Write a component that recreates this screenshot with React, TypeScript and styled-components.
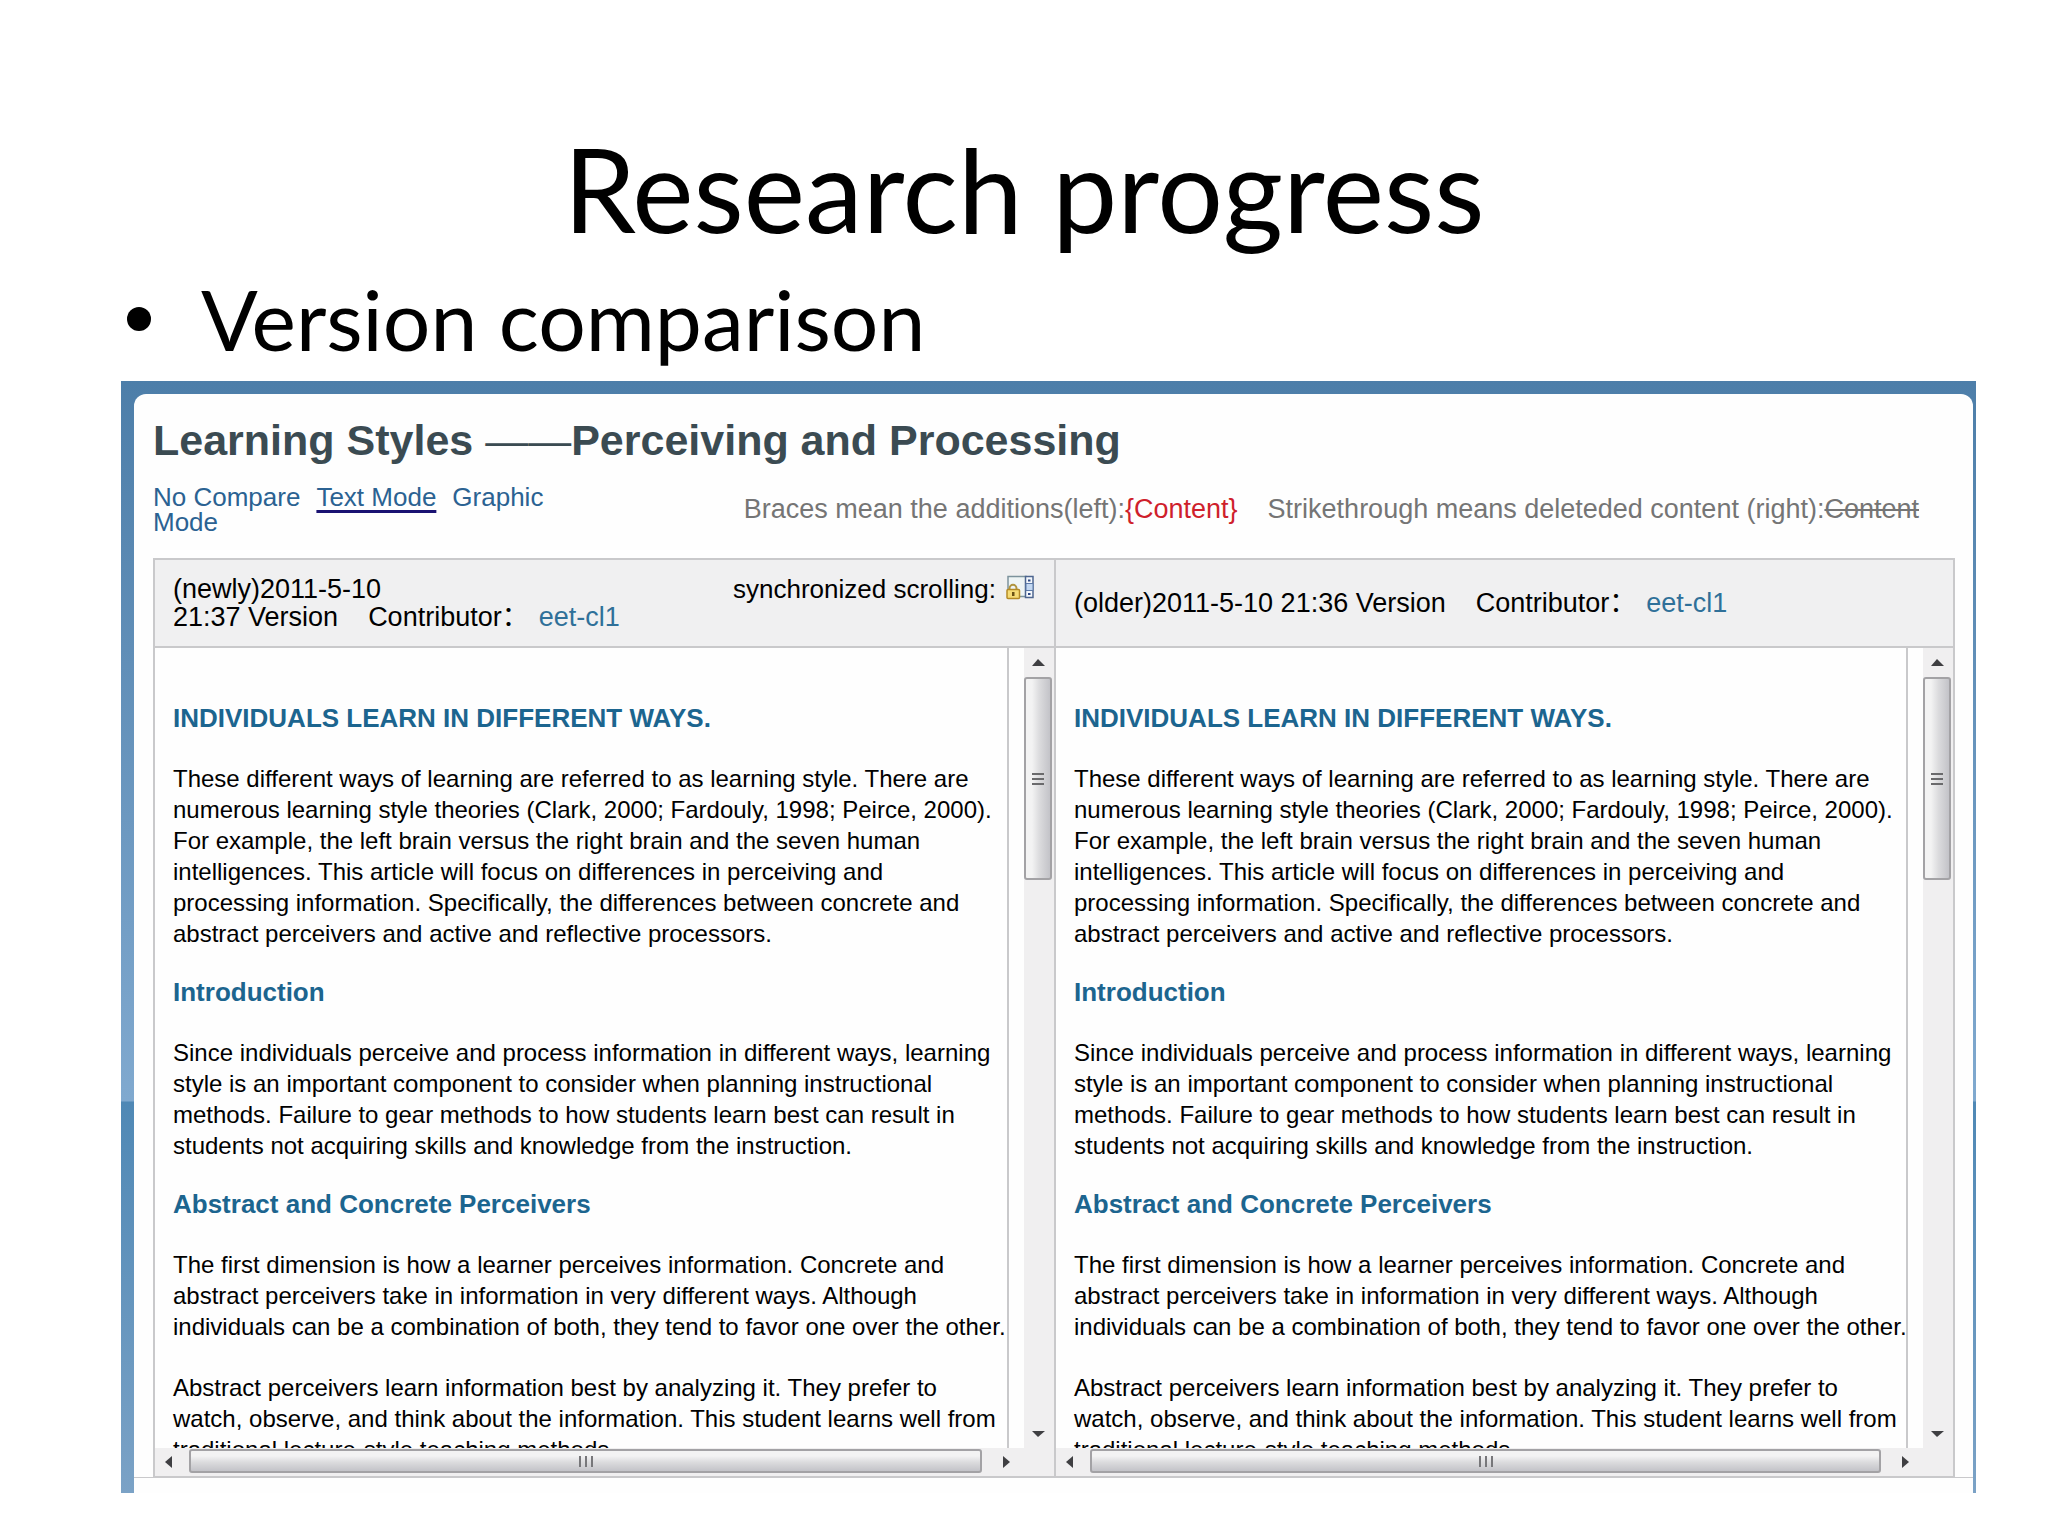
import React from "react";
import styled, { createGlobalStyle } from "styled-components";

const ui = '"Liberation Sans", Arial, "Noto Sans CJK SC", sans-serif';
const line = "#c9c9cb";

const GlobalStyle = createGlobalStyle`
  * { box-sizing: border-box; }
  body { margin: 0; background: #fff; color: #000; font-family: ${ui}; }
`;

const Slide = styled.main`
  display: flex;
  flex-direction: column;
  padding: 117px 72px 40px 121px;
`;

const SlideTitle = styled.h1`
  margin: 0 0 0 -49px;
  font: 400 116px/144px Lato, sans-serif;
  text-align: center;
`;

const Points = styled.ul`
  margin: 0;
  padding: 0;
  list-style: none;
`;

const Point = styled.li`
  display: flex;
  align-items: center;
  gap: 50px;
  margin: 8px 0 12px 6px;
  font: 400 84px/100px Lato, sans-serif;
  &::before {
    content: "";
    width: 24px;
    height: 24px;
    border-radius: 50%;
    background: #000;
  }
`;

const Frame = styled.section`
  padding: 13px 3px 0 13px;
  background: linear-gradient(#4d7ea9, #80a9cf 720px, #4f88b5 721px, #7ba2c6);
`;

const Sheet = styled.div`
  padding: 24px 18px 0 19px;
  background: #fefefe;
  border-bottom: 1px solid ${line};
  border-radius: 12px 12px 0 0;
`;

const FrameFoot = styled.div`
  height: 15px;
  background: #fefefe;
`;

const DocTitle = styled.h2`
  margin: 0;
  color: #3b4b52;
  font-size: 43px;
  line-height: 44px;
`;

const Dash = styled.span`
  font-weight: 400;
`;

const Toolbar = styled.div`
  display: flex;
  justify-content: space-between;
  padding: 23px 36px 23px 0;
  font-size: 26px;
  line-height: 25px;
`;

const Modes = styled.nav`
  width: 420px;
`;

const ModeLink = styled.a<{ $current?: boolean }>`
  margin-right: 16px;
  color: #2b6292;
  text-decoration: ${(p) => (p.$current ? "underline 3px #1a1272" : "none")};
  text-underline-offset: 4px;
  text-decoration-skip-ink: none;
`;

const Legend = styled.p`
  display: flex;
  gap: 30px;
  margin: 12px 0 0;
  color: #757575;
  font-size: 27px;
`;

const Added = styled.ins`
  color: #cf1f2c;
  text-decoration: none;
`;

const Compare = styled.div`
  display: grid;
  grid-template-columns: 1fr 1fr;
  border: 2px solid ${line};
  border-bottom-width: 1px;
`;

const Version = styled.article`
  min-width: 0;
  & + & { border-left: 2px solid ${line}; }
`;

const VersionHead = styled.header`
  display: flex;
  justify-content: space-between;
  align-items: center;
  height: 88px;
  padding: 0 20px 0 18px;
  background: #f0f0f1;
  border-bottom: 2px solid ${line};
  font-size: 27px;
  line-height: 28px;
`;

const Contributor = styled.span`
  margin-left: 30px;
`;

const UserLink = styled.a`
  margin-left: 10px;
  color: #2f7099;
  text-decoration: none;
`;

const Sync = styled.button`
  display: flex;
  align-self: flex-start;
  gap: 10px;
  margin-top: 15px;
  padding: 0;
  border: 0;
  background: none;
  color: inherit;
  font-family: inherit;
  font-size: 26px;
  line-height: 28px;
`;

const Viewport = styled.div`
  display: grid;
  grid-template-columns: minmax(0, 1fr) 30px;
  grid-template-rows: 800px 28px;
`;

const Page = styled.div`
  margin-right: 15px;
  padding: 55px 0 0 18px;
  overflow: hidden;
  border-right: 2px solid ${line};
  font-size: 24px;
  line-height: 31px;
  white-space: nowrap;
`;

const SectionHead = styled.h3`
  margin: 0 0 29px;
  color: #1c658f;
  font-size: 26px;
  line-height: 31px;
`;

const Para = styled.p`
  margin: 0 0 28px;
  & + & { margin-top: 30px; }
`;

const Bar = styled.div<{ $across?: boolean }>`
  display: flex;
  flex-direction: ${(p) => (p.$across ? "row" : "column")};
  padding: ${(p) => (p.$across ? "0 4px 0 0" : "1px 0 0")};
  background: #f0eff0;
`;

const Arrow = styled.button`
  display: grid;
  place-items: center;
  width: 28px;
  height: 28px;
  padding: 0;
  border: 0;
  background: none;
`;

const ThumbV = styled.div`
  display: grid;
  place-items: center;
  width: 28px;
  height: 203px;
  border: 2px solid #a3a2a5;
  border-radius: 3px;
  background: linear-gradient(90deg, #f3f3f3 0 25%, #dcdcde 55%, #c3c3c8);
`;

const ThumbH = styled.div`
  display: grid;
  place-items: center;
  flex: 1;
  height: 24px;
  margin: 1px 10px 0 6px;
  border: 2px solid #a3a2a5;
  border-radius: 3px;
  background: linear-gradient(#f3f3f3 0 25%, #dcdcde 55%, #c3c3c8);
`;

const Push = styled.div`
  flex: 1;
`;

const Corner = styled.div`
  background: #f0eff0;
`;

const arrows = {
  up: "M0 9 6 2l7 7z",
  down: "M0 3h13L6 9z",
  left: "M9 0v12L2 6z",
  right: "M3 0v12l7-6z",
};

function ArrowButton({ dir }: { dir: keyof typeof arrows }) {
  return (
    <Arrow type="button" aria-label={"Scroll " + dir}>
      <svg width="13" height="12" viewBox="0 0 13 12"><path d={arrows[dir]} fill="#3f3f42" /></svg>
    </Arrow>
  );
}

function LockIcon() {
  return (
    <svg width="28" height="25" viewBox="0 0 28 25">
      <path d="M2 1.5h18v20H2z" fill="#eef4f5" stroke="#7d939d" strokeWidth="1.5" />
      <path d="M19.5 1.5h7.5v21h-7.5z" fill="#f4f8fd" stroke="#4d658f" strokeWidth="1.5" />
      <path d="M20 8.5h7v7h-7z" fill="#c3d8f2" stroke="#5d7aa8" strokeWidth="1" />
      <path d="M22 4.5h2.5v2H22zM22 18h2.5v2H22z" fill="#2f4a86" />
      <path d="M3.5 15v-1.5a3.5 3.8 0 0 1 7 0V15" fill="none" stroke="#b0943f" strokeWidth="2" />
      <rect x="1" y="14.5" width="12.5" height="9" rx="1" fill="#f6dc76" stroke="#b48a26" strokeWidth="1.5" />
      <path d="M6 17h2.5v4H6z" fill="#6b5214" />
    </svg>
  );
}

function Article() {
  return (
    <>
      <SectionHead>INDIVIDUALS LEARN IN DIFFERENT WAYS.</SectionHead>
      <Para>
        These different ways of learning are referred to as learning style. There are<br />
        numerous learning style theories (Clark, 2000; Fardouly, 1998; Peirce, 2000).<br />
        For example, the left brain versus the right brain and the seven human<br />
        intelligences. This article will focus on differences in perceiving and<br />
        processing information. Specifically, the differences between concrete and<br />
        abstract perceivers and active and reflective processors.
      </Para>
      <SectionHead>Introduction</SectionHead>
      <Para>
        Since individuals perceive and process information in different ways, learning<br />
        style is an important component to consider when planning instructional<br />
        methods. Failure to gear methods to how students learn best can result in<br />
        students not acquiring skills and knowledge from the instruction.
      </Para>
      <SectionHead>Abstract and Concrete Perceivers</SectionHead>
      <Para>
        The first dimension is how a learner perceives information. Concrete and<br />
        abstract perceivers take in information in very different ways. Although<br />
        individuals can be a combination of both, they tend to favor one over the other.
      </Para>
      <Para>
        Abstract perceivers learn information best by analyzing it. They prefer to<br />
        watch, observe, and think about the information. This student learns well from<br />
        traditional lecture-style teaching methods.
      </Para>
    </>
  );
}

function Scroller() {
  return (
    <Viewport>
      <Page><Article /></Page>
      <Bar>
        <ArrowButton dir="up" />
        <ThumbV><svg width="12" height="14"><path d="M0 2h12M0 7h12M0 12h12" stroke="#6a6a6c" strokeWidth="2" /></svg></ThumbV>
        <Push />
        <ArrowButton dir="down" />
      </Bar>
      <Bar $across>
        <ArrowButton dir="left" />
        <ThumbH><svg width="16" height="11"><path d="M2 0v11M8 0v11M14 0v11" stroke="#77777a" strokeWidth="2" /></svg></ThumbH>
        <ArrowButton dir="right" />
      </Bar>
      <Corner />
    </Viewport>
  );
}

export default function App() {
  return (
    <Slide>
      <GlobalStyle />
      <SlideTitle>Research progress</SlideTitle>
      <Points><Point>Version comparison</Point></Points>
      <Frame>
        <Sheet>
          <DocTitle>Learning Styles <Dash>——</Dash>Perceiving and Processing</DocTitle>
          <Toolbar>
            <Modes>
              <ModeLink href="#none">No Compare</ModeLink>
              <ModeLink href="#text" $current>Text Mode</ModeLink>
              <ModeLink href="#graphic">Graphic Mode</ModeLink>
            </Modes>
            <Legend>
              <span>Braces mean the additions(left):<Added>{"{Content}"}</Added></span>
              <span>Strikethrough means deleteded content (right):<del>Content</del></span>
            </Legend>
          </Toolbar>
          <Compare>
            <Version>
              <VersionHead>
                <span>(newly)2011-5-10<br />21:37 Version<Contributor lang="zh-CN">Contributor：</Contributor><UserLink href="#user">eet-cl1</UserLink></span>
                <Sync type="button">synchronized scrolling: <LockIcon /></Sync>
              </VersionHead>
              <Scroller />
            </Version>
            <Version>
              <VersionHead>
                <span>(older)2011-5-10 21:36 Version<Contributor lang="zh-CN">Contributor：</Contributor><UserLink href="#user">eet-cl1</UserLink></span>
              </VersionHead>
              <Scroller />
            </Version>
          </Compare>
        </Sheet>
        <FrameFoot />
      </Frame>
    </Slide>
  );
}
